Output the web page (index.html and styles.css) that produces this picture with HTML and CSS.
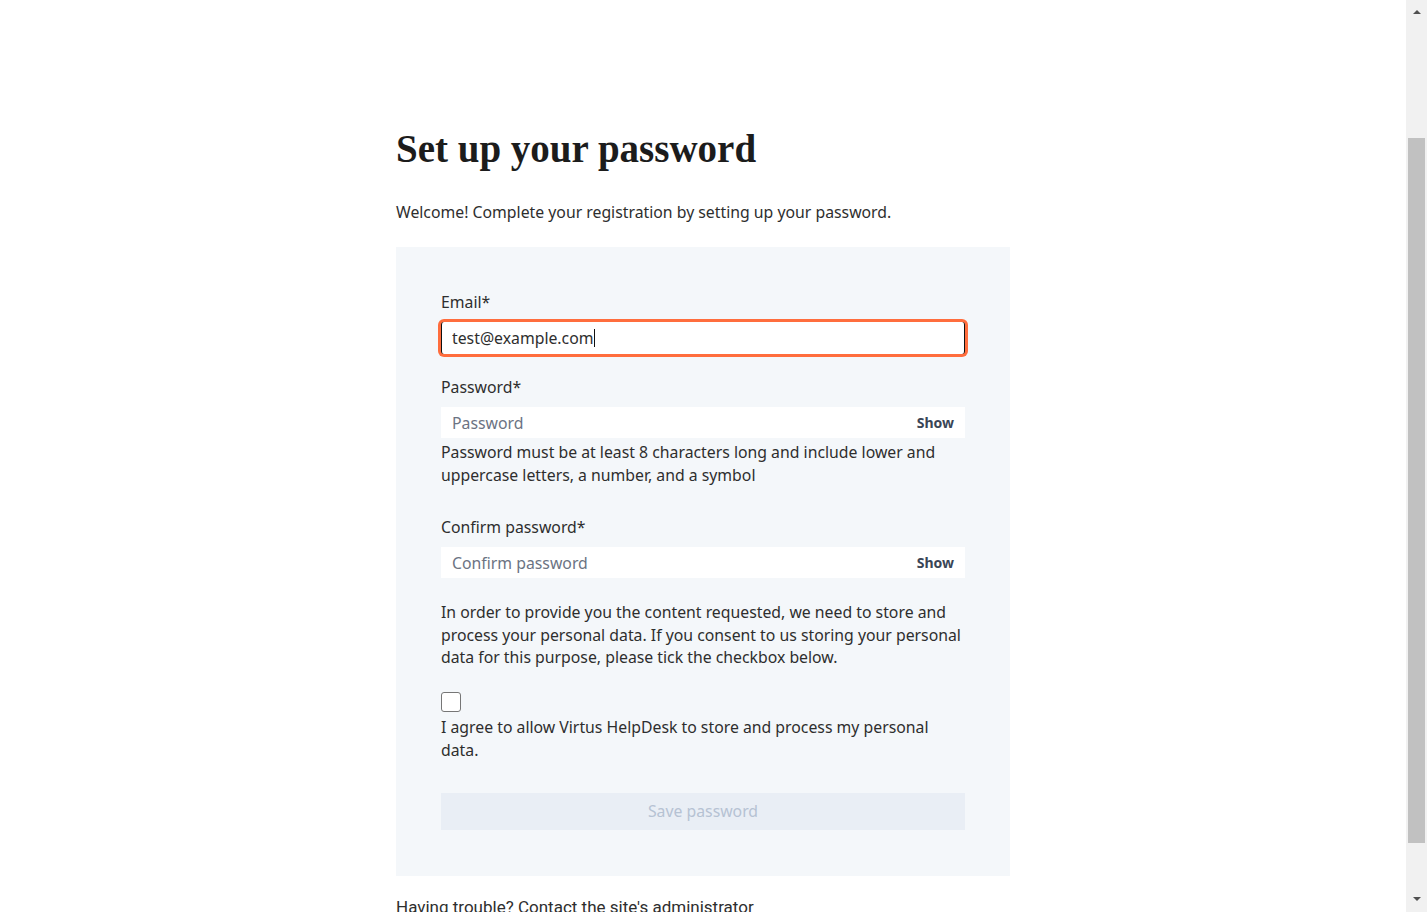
FILE: index.html
```html
<!DOCTYPE html>
<html lang="en">
<head>
<meta charset="utf-8">
<title>Set up your password</title>
<link rel="stylesheet" href="styles.css">
</head>
<body>
<div class="viewport">
  <main class="page">
    <h1 class="title">Set up your password</h1>
    <p class="intro">Welcome! Complete your registration by setting up your password.</p>
    <form class="card">
      <label class="label" for="email">Email*</label>
      <div class="field field-focus">
        <input id="email" class="input" type="text" value="test@example.com"><span class="caret"></span>
      </div>

      <label class="label label-gap" for="pw">Password*</label>
      <div class="field">
        <span class="placeholder">Password</span>
        <span class="show">Show</span>
      </div>
      <p class="hint">Password must be at least 8 characters long and include lower and uppercase letters, a number, and a symbol</p>

      <label class="label label-gap2" for="pw2">Confirm password*</label>
      <div class="field">
        <span class="placeholder">Confirm password</span>
        <span class="show">Show</span>
      </div>

      <p class="consent">In order to provide you the content requested, we need to store and process your personal data. If you consent to us storing your personal data for this purpose, please tick the checkbox below.</p>

      <span class="checkbox"></span>
      <p class="agree">I agree to allow Virtus HelpDesk to store and process my personal data.</p>

      <button class="save" type="button">Save password</button>
    </form>
    <p class="trouble">Having trouble? <a class="link" href="#">Contact the site's administrator</a></p>
  </main>
</div>
<div class="scrollbar" aria-hidden="true">
  <div class="sb-btn sb-up"><span class="arrow-up"></span></div>
  <div class="sb-track"><div class="sb-thumb"></div></div>
  <div class="sb-btn sb-down"><span class="arrow-down"></span></div>
</div>
</body>
</html>
```
FILE: styles.css
```css
html, body {
  height: 100%;
}

body {
  margin: 0;
  background: #ffffff;
  color: #2e2e2e;
  font-family: "Noto Sans", "DejaVu Sans", sans-serif;
  display: flex;
  overflow: hidden;
}

.viewport {
  flex: 1 1 auto;
  min-width: 0;
  overflow: hidden;
}

/* faux scrollbar */
.scrollbar {
  flex: 0 0 21px;
  background: #f1f1f1;
  display: flex;
  flex-direction: column;
}
.sb-btn {
  height: 17px;
  display: flex;
  justify-content: center;
}
.sb-up { align-items: flex-end; padding-bottom: 3px; box-sizing: border-box; }
.sb-down { align-items: flex-start; padding-top: 2px; box-sizing: border-box; }
.arrow-up {
  width: 0;
  height: 0;
  border-left: 4px solid transparent;
  border-right: 4px solid transparent;
  border-bottom: 4px solid #505050;
}
.arrow-down {
  width: 0;
  height: 0;
  border-left: 4px solid transparent;
  border-right: 4px solid transparent;
  border-top: 4px solid #505050;
}
.sb-track {
  flex: 1 1 auto;
  padding: 121px 2px 0;
}
.sb-thumb {
  height: 705px;
  background: #c1c1c1;
}

.page {
  width: 614px;
  margin: 0 auto;
  padding: 125px 0 222px;
}

.title {
  margin: 0;
  font-family: "Liberation Serif", "DejaVu Serif", serif;
  font-weight: 700;
  font-size: 39px;
  line-height: 48px;
  color: #1c1c1c;
}

.intro {
  margin: 28px 0 0;
  font-size: 15.8px;
  line-height: 22px;
}

.card {
  margin-top: 24px;
  background: #f4f7fa;
  padding: 44px 45px 46px;
  display: flex;
  flex-direction: column;
  align-items: flex-start;
}

.label {
  display: block;
  font-size: 15.8px;
  line-height: 22px;
}
.label-gap { margin-top: 22px; }
.label-gap2 { margin-top: 29px; }

.field {
  margin-top: 9px;
  width: 100%;
  box-sizing: border-box;
  height: 31px;
  background: #ffffff;
  display: flex;
  align-items: center;
  justify-content: space-between;
  padding: 0 11px;
}

.field-focus {
  height: 32px;
  border-left: 1px solid #111;
  border-right: 1px solid #111;
  padding-left: 10px;
  border-radius: 3px;
  box-shadow: 0 0 0 3px #ff6d3d;
  justify-content: flex-start;
}

.input {
  border: 0;
  outline: 0;
  padding: 0;
  margin: 0;
  background: transparent;
  font-family: inherit;
  font-size: 15.8px;
  color: #2e2e2e;
  width: 142px;
}

.caret {
  display: inline-block;
  width: 1px;
  height: 18px;
  background: #111;
}

.placeholder {
  font-size: 15.8px;
  color: #6b7383;
}

.show {
  font-size: 14px;
  font-weight: 700;
  color: #3a4556;
}

.hint {
  margin: 3px 0 0;
  font-size: 15.8px;
  line-height: 23px;
}

.consent {
  margin: 23px 0 0;
  font-size: 15.8px;
  line-height: 22.5px;
}

.checkbox {
  display: block;
  margin-top: 23px;
  width: 20px;
  height: 20px;
  box-sizing: border-box;
  border: 1px solid #767676;
  border-radius: 3px;
  background: #fff;
}

.agree {
  margin: 4px 0 0;
  font-size: 15.8px;
  line-height: 23px;
}

.save {
  margin-top: 31px;
  width: 100%;
  height: 37px;
  border: 0;
  background: #e9eef5;
  color: #b6c2d3;
  font-family: inherit;
  font-size: 15.8px;
  padding: 0;
}

.trouble {
  margin: 21px 0 0;
  font-family: Roboto, "Open Sans", sans-serif;
  font-size: 17px;
  line-height: 20px;
}

.link {
  color: inherit;
  text-decoration: none;
}
```
